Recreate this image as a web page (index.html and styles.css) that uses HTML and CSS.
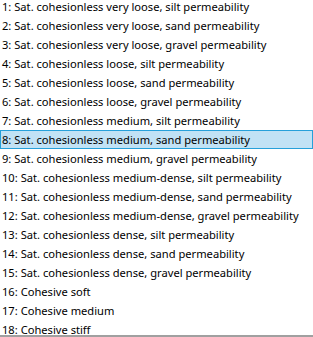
FILE: index.html
```html
<!DOCTYPE html>
<html lang="en">
<head>
  <meta charset="UTF-8">
  <title>Soil types</title>
  <link rel="stylesheet" href="styles.css">
</head>
<body>
  <div class="lista">
    <ul>
      <li>1: Sat. cohesionless very loose, silt permeability</li>
      <li>2: Sat. cohesionless very loose, sand permeability</li>
      <li>3: Sat. cohesionless very loose, gravel permeability</li>
      <li>4: Sat. cohesionless loose, silt permeability</li>
      <li>5: Sat. cohesionless loose, sand permeability</li>
      <li>6: Sat. cohesionless loose, gravel permeability</li>
      <li>7: Sat. cohesionless medium, silt permeability</li>
      <li class="activo">8: Sat. cohesionless medium, sand permeability</li>
      <li>9: Sat. cohesionless medium, gravel permeability</li>
      <li>10: Sat. cohesionless medium-dense, silt permeability</li>
      <li>11: Sat. cohesionless medium-dense, sand permeability</li>
      <li>12: Sat. cohesionless medium-dense, gravel permeability</li>
      <li>13: Sat. cohesionless dense, silt permeability</li>
      <li>14: Sat. cohesionless dense, sand permeability</li>
      <li>15: Sat. cohesionless dense, gravel permeability</li>
      <li>16: Cohesive soft</li>
      <li>17: Cohesive medium</li>
      <li>18: Cohesive stiff</li>
    </ul>
  </div>
</body>
</html>
```

FILE: styles.css
```css
body {
  margin: 0;
  background: #ffffff;
  font-family: 'Noto Sans', 'Open Sans', sans-serif;
  font-size: 11.15px;
  color: #000000;
}
.lista {
  height: 335px;
  overflow: hidden;
  border-bottom: 2px solid #a0a0a0;
}
.lista ul {
  list-style: none;
  margin: -3px 0 0 0;
  padding: 0;
}
.lista li {
  height: 19px;
  line-height: 19px;
  padding-left: 2px;
  white-space: nowrap;
  box-sizing: border-box;
}
.lista li.activo {
  background-color: #c1e2f5;
  border: 1px solid #26a0da;
  line-height: 17px;
  padding-left: 1px;
}
```
